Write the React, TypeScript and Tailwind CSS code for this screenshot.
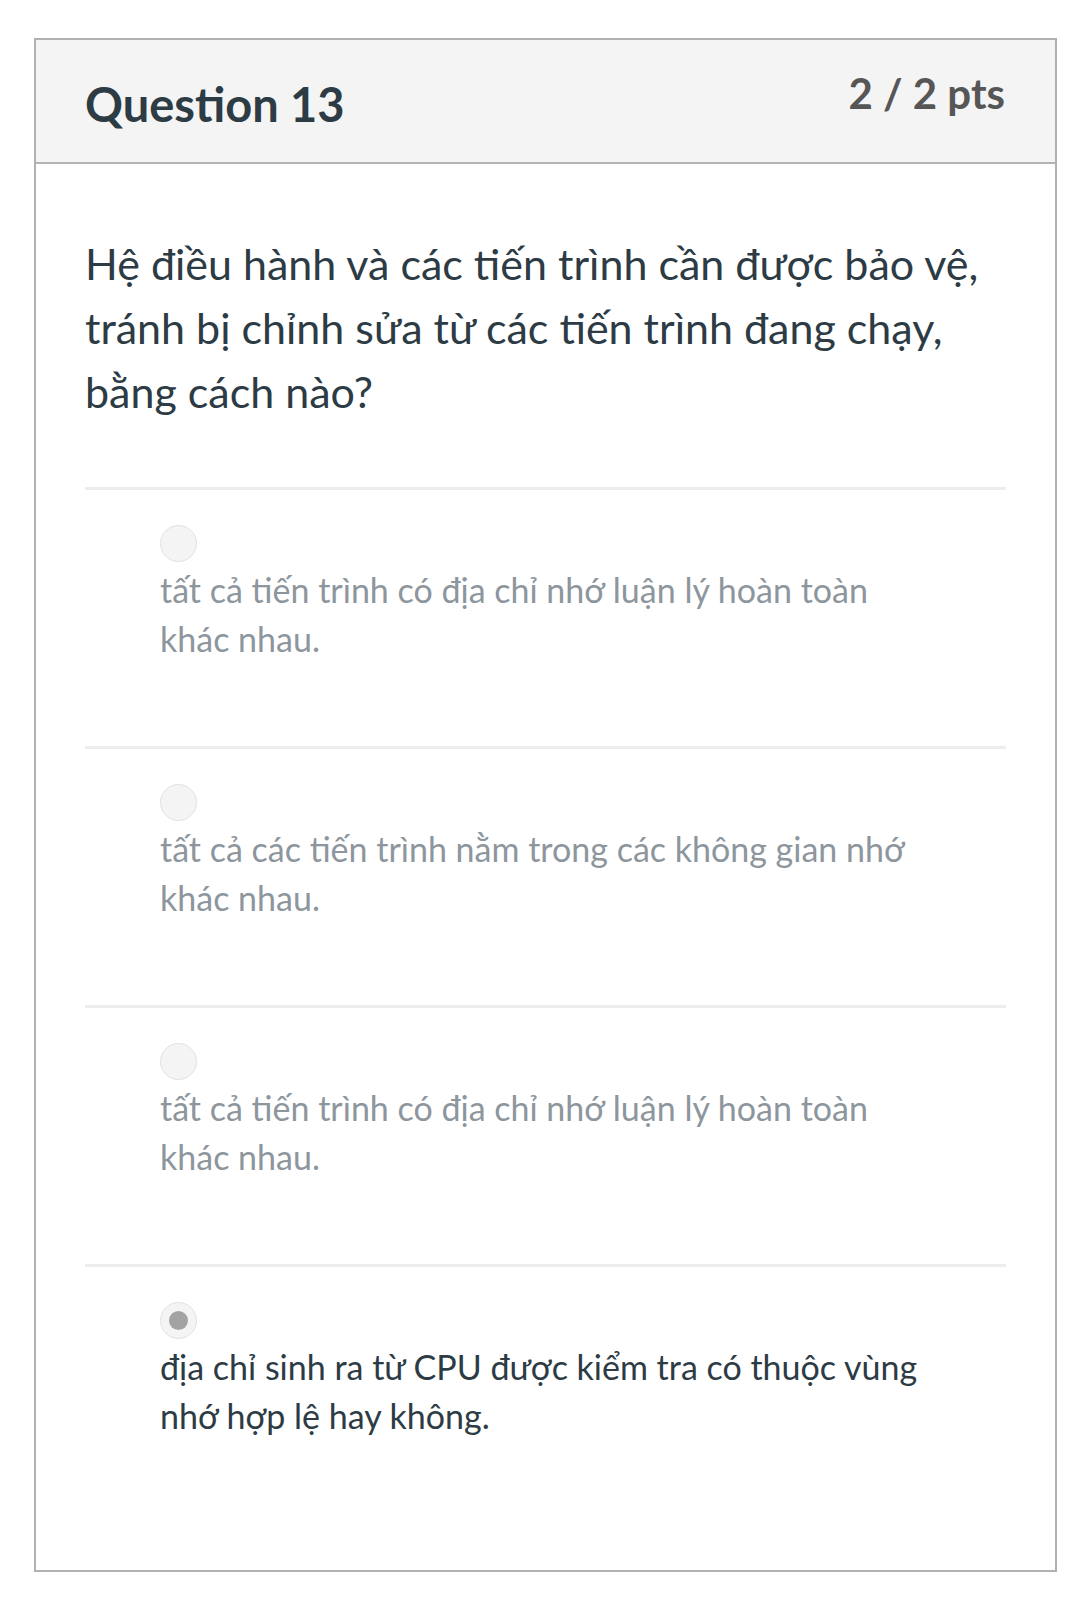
import React from 'react';

const options = [
  { text: 'tất cả tiến trình có địa chỉ nhớ luận lý hoàn toàn khác nhau.', selected: false },
  { text: 'tất cả các tiến trình nằm trong các không gian nhớ khác nhau.', selected: false },
  { text: 'tất cả tiến trình có địa chỉ nhớ luận lý hoàn toàn khác nhau.', selected: false },
  { text: 'địa chỉ sinh ra từ CPU được kiểm tra có thuộc vùng nhớ hợp lệ hay không.', selected: true },
];

function Radio({ checked }: { checked: boolean }) {
  return (
    <div className="w-[37px] h-[37px] rounded-full bg-[#f4f4f4] border border-[#e2e2e2] flex items-center justify-center">
      {checked && <div className="w-[19px] h-[19px] rounded-full bg-[#a3a3a3]" />}
    </div>
  );
}

export default function App() {
  return (
    <div className="bg-white min-h-[1598px] pt-[38px] px-[34px] font-['Lato','Noto_Sans',sans-serif]">
      <div className="w-[1023px] h-[1534px] border-2 border-[#b1b1b1] flex flex-col">
        <div className="h-[124px] bg-[#f4f4f4] border-b-2 border-[#b4b4b4] flex justify-between pl-[49px] pr-[50px]">
          <h1 className="text-[47px] font-bold text-[#2d3b45] mt-[32px] leading-[64px]">Question 13</h1>
          <div className="text-[42px] font-bold text-[#565656] mt-[25px] leading-[56px]">2 / 2 pts</div>
        </div>

        <div className="px-[49px] pt-[68px]">
          <p className="text-[43px] leading-[64px] text-[#2d3b45] pr-[10px]">
            Hệ điều hành và các tiến trình cần được bảo vệ, tránh bị chỉnh sửa từ các tiến trình đang chạy, bằng cách nào?
          </p>

          <div className="mt-[63px]">
            {options.map((opt, i) => (
              <div key={i} className="border-t-[3px] border-[#ededed] pt-[35px] pb-[83px] pl-[75px]">
                <Radio checked={opt.selected} />
                <div
                  className={
                    'mt-[3px] max-w-[770px] text-[34px] leading-[49px] ' +
                    (opt.selected ? 'text-[#2d3b45]' : 'text-[#8d969d]')
                  }
                >
                  {opt.text}
                </div>
              </div>
            ))}
          </div>
        </div>
      </div>
    </div>
  );
}
